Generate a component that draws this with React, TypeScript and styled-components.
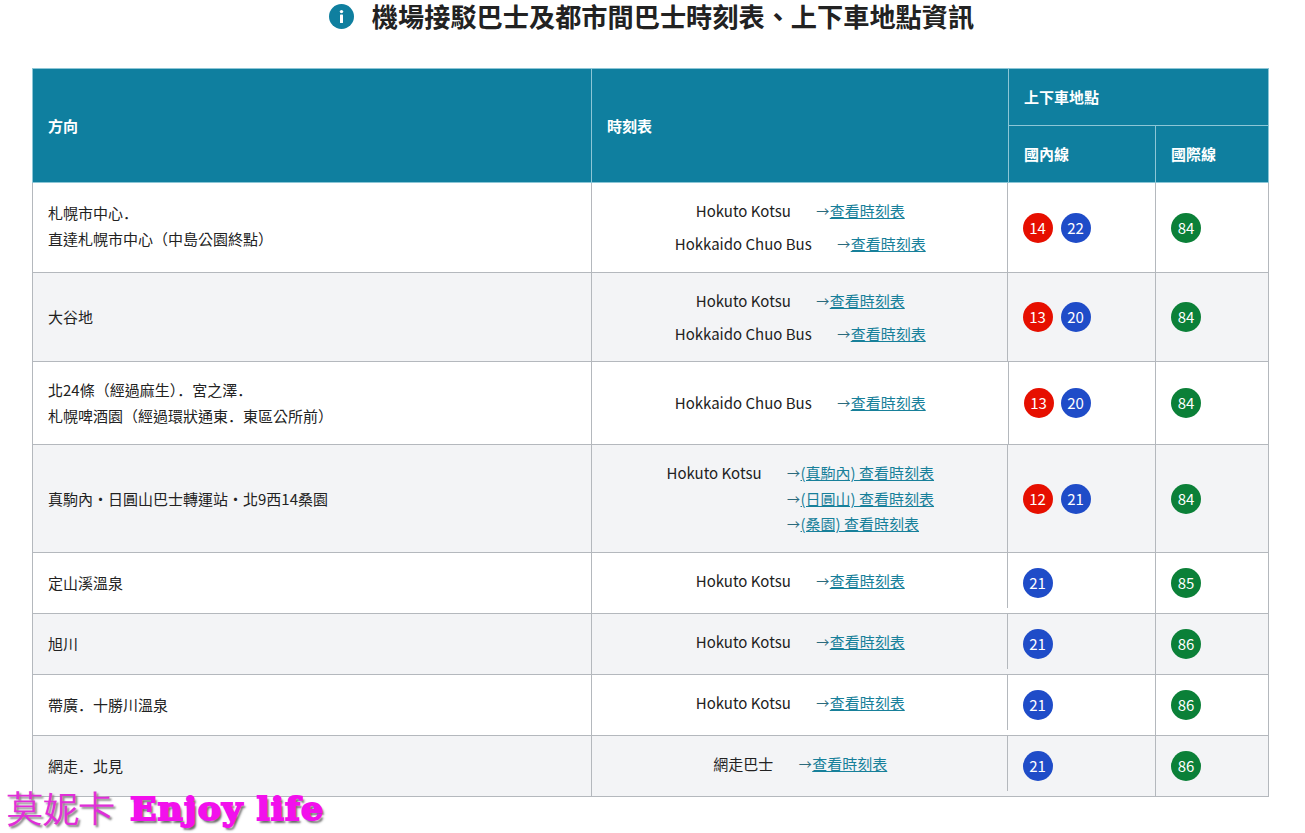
import styled, { createGlobalStyle } from "styled-components"

const GlobalStyle = createGlobalStyle`
  html, body {
    margin: 0;
    padding: 0;
    background: #ffffff;
    overflow: hidden;
  }
  body {
    font-family: "Noto Sans CJK TC", "Noto Sans", sans-serif;
    color: #222222;
  }
`

const Page = styled.div`
  position: relative;
  width: 1305px;
  height: 833px;
  padding: 0 37px 0 32px;
  box-sizing: border-box;
  overflow: hidden;
`

const Title = styled.h2`
  height: 68px;
  margin: 0;
  padding: 0 0 36px 3px;
  box-sizing: border-box;
  display: flex;
  align-items: center;
  justify-content: center;
  gap: 18px;
  font-size: 26.2px;
  line-height: 32px;
  font-weight: 700;
  color: #222222;
`

const Table = styled.table`
  width: 1236px;
  table-layout: fixed;
  border-collapse: collapse;
  font-size: 15px;
  line-height: 26px;
`

const Th = styled.th`
  background: #0f7f9f;
  color: #ffffff;
  font-size: 15px;
  font-weight: 700;
  text-align: left;
  padding: 0 15px;
  height: 56px;
  border: 1px solid #8cc6d6;
`

const Row = styled.tr<{ $h: number; $alt?: boolean }>`
  height: ${(p) => p.$h}px;
  background: ${(p) => (p.$alt ? "#f3f4f6" : "#ffffff")};
`

const Td = styled.td`
  padding: 0 15px;
  border: 1px solid #b4b8bd;
  vertical-align: middle;
`

const DirCell = styled(Td)<{ $lift: number }>`
  padding-bottom: ${(p) => p.$lift}px;
`

const TimeCell = styled(Td)<{ $lift: number }>`
  text-align: center;
  padding-bottom: ${(p) => p.$lift}px;
  border-right: none;
`

// the divider in front of the domestic column sits a pixel off and stops short in some rows
const StopCell = styled(Td)<{ $offset: number; $short: number }>`
  position: relative;
  border-left: none;
  padding-left: ${(p) => 14 + p.$offset}px;

  &::before {
    content: "";
    position: absolute;
    left: ${(p) => p.$offset - 2}px;
    top: 0;
    bottom: ${(p) => p.$short}px;
    width: 1px;
    background: #b4b8bd;
  }
`

const Dot = styled.span`
  font-family: "Noto Sans CJK JP", sans-serif;
`

const TimeLine = styled.div<{ $gap?: number }>`
  display: flex;
  justify-content: center;
  gap: 25px;
  line-height: 26px;
  margin-bottom: ${(p) => p.$gap ?? 0}px;
`

const Links = styled.div`
  display: flex;
  flex-direction: column;
  align-items: flex-start;
`

const LinkRow = styled.span`
  display: flex;
  height: 25.5px;
  line-height: 25.5px;
  white-space: nowrap;
`

const Arrow = styled.span`
  width: 14px;
  font-size: 13px;
  color: #2a6a7c;
`

const Link = styled.a`
  color: #17809a;
  text-decoration: underline;
`

const Badges = styled.div<{ $gap?: number }>`
  display: flex;
  gap: ${(p) => p.$gap ?? 8}px;
`

const Badge = styled.span<{ $color: string }>`
  width: 30px;
  height: 30px;
  border-radius: 50%;
  background: ${(p) => p.$color};
  color: #ffffff;
  font-size: 15px;
  line-height: 30px;
  text-align: center;
`

const Watermark = styled.div`
  position: absolute;
  left: 7px;
  top: 787px;
  display: flex;
  align-items: center;
  gap: 15px;
  white-space: nowrap;
`

const WatermarkCjk = styled.span`
  font-family: "Liberation Serif", serif;
  font-size: 36px;
  line-height: 44px;
  color: #e02fd8;
  text-shadow: 2px 2px 2px #888888;
`

const WatermarkLatin = styled.span`
  font-family: "DejaVu Serif", serif;
  font-size: 31px;
  line-height: 44px;
  font-weight: 700;
  letter-spacing: 1px;
  color: #f210ec;
  -webkit-text-stroke: 1.8px #f210ec;
  text-shadow: 2px 3px 2px #666666;
  transform: scaleX(1.12);
  transform-origin: left center;
`

const RED = "#e60f00"
const BLUE = "#1f4cc8"
const GREEN = "#0b8038"

type Service = { name: string; links: string[] }

type DataRow = {
  h: number
  dir: string[]
  dirLift?: number
  services: Service[]
  red?: number
  blue: number
  green: number
  offset?: number
}

const plain = ["查看時刻表"]

const rows: DataRow[] = [
  {
    h: 90,
    dir: ["札幌市中心．", "直達札幌市中心（中島公園終點）"],
    dirLift: 4,
    services: [
      { name: "Hokuto Kotsu", links: plain },
      { name: "Hokkaido Chuo Bus", links: plain },
    ],
    red: 14,
    blue: 22,
    green: 84,
  },
  {
    h: 89,
    dir: ["大谷地"],
    services: [
      { name: "Hokuto Kotsu", links: plain },
      { name: "Hokkaido Chuo Bus", links: plain },
    ],
    red: 13,
    blue: 20,
    green: 84,
  },
  {
    h: 83,
    dir: ["北24條（經過麻生）．宮之澤．", "札幌啤酒園（經過環狀通東．東區公所前）"],
    services: [{ name: "Hokkaido Chuo Bus", links: plain }],
    red: 13,
    blue: 20,
    green: 84,
    offset: 1,
  },
  {
    h: 108,
    dir: ["真駒內・日圓山巴士轉運站・北9西14桑園"],
    services: [
      {
        name: "Hokuto Kotsu",
        links: ["(真駒內) 查看時刻表", "(日圓山) 查看時刻表", "(桑園) 查看時刻表"],
      },
    ],
    red: 12,
    blue: 21,
    green: 84,
  },
  { h: 61, dir: ["定山溪溫泉"], services: [{ name: "Hokuto Kotsu", links: plain }], blue: 21, green: 85 },
  { h: 61, dir: ["旭川"], services: [{ name: "Hokuto Kotsu", links: plain }], blue: 21, green: 86 },
  { h: 61, dir: ["帶廣．十勝川溫泉"], services: [{ name: "Hokuto Kotsu", links: plain }], blue: 21, green: 86 },
  { h: 61, dir: ["網走．北見"], services: [{ name: "網走巴士", links: plain }], blue: 21, green: 86 },
]

function InfoIcon() {
  return (
    <svg width="25" height="25" viewBox="0 0 25 25" aria-hidden="true">
      <circle cx="12.5" cy="12.5" r="12.5" fill="#0f7f9f" />
      <circle cx="12.5" cy="7.6" r="1.7" fill="#ffffff" />
      <rect x="11" y="10.6" width="3" height="8.4" rx="0.6" fill="#ffffff" />
    </svg>
  )
}

// the full-width stop is set low in the JP face, centred in the TC one
function DirLine({ text }: { text: string }) {
  return (
    <div>
      {text.split(/(．)/).map((part, i) => (part === "．" ? <Dot key={i}>{part}</Dot> : part))}
    </div>
  )
}

export default function App() {
  return (
    <Page>
      <GlobalStyle />
      <Title>
        <InfoIcon />
        機場接駁巴士及都市間巴士時刻表、上下車地點資訊
      </Title>
      <Table>
        <colgroup>
          <col style={{ width: 559 }} />
          <col style={{ width: 417 }} />
          <col style={{ width: 147 }} />
          <col style={{ width: 113 }} />
        </colgroup>
        <thead>
          <tr>
            <Th rowSpan={2}>方向</Th>
            <Th rowSpan={2}>時刻表</Th>
            <Th colSpan={2}>上下車地點</Th>
          </tr>
          <tr>
            <Th>國內線</Th>
            <Th>國際線</Th>
          </tr>
        </thead>
        <tbody>
          {rows.map((row, i) => (
            <Row key={i} $h={row.h} $alt={i % 2 === 1}>
              <DirCell $lift={row.dirLift ?? 0}>
                {row.dir.map((line) => (
                  <DirLine key={line} text={line} />
                ))}
              </DirCell>
              <TimeCell $lift={row.h === 61 ? 4 : 0}>
                {row.services.map((s, j) => (
                  <TimeLine key={s.name} $gap={j < row.services.length - 1 ? 7 : 0}>
                    <span>{s.name}</span>
                    <Links>
                      {s.links.map((l) => (
                        <LinkRow key={l}>
                          <Arrow>→</Arrow>
                          <Link>{l}</Link>
                        </LinkRow>
                      ))}
                    </Links>
                  </TimeLine>
                ))}
              </TimeCell>
              <StopCell $offset={row.offset ?? 0} $short={row.h === 61 ? 5 : 0}>
                <Badges $gap={8 - (row.offset ?? 0)}>
                  {row.red !== undefined && <Badge $color={RED}>{row.red}</Badge>}
                  <Badge $color={BLUE}>{row.blue}</Badge>
                </Badges>
              </StopCell>
              <Td>
                <Badges>
                  <Badge $color={GREEN}>{row.green}</Badge>
                </Badges>
              </Td>
            </Row>
          ))}
        </tbody>
      </Table>
      <Watermark>
        <WatermarkCjk>莫妮卡</WatermarkCjk>
        <WatermarkLatin>Enjoy life</WatermarkLatin>
      </Watermark>
    </Page>
  )
}
